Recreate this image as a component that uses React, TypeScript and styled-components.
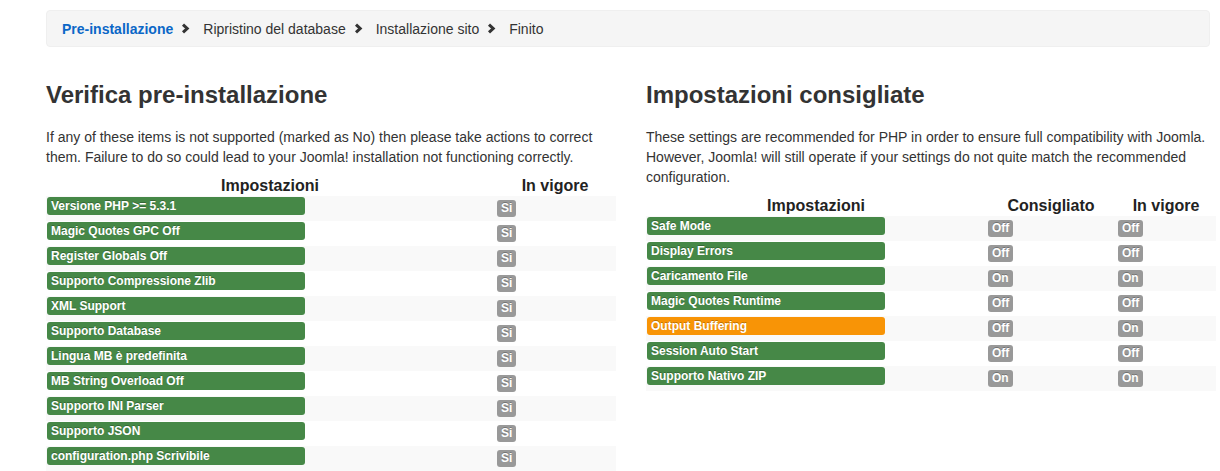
import React from 'react';
import styled, { createGlobalStyle } from 'styled-components';

const GlobalStyle = createGlobalStyle`
  html, body {
    margin: 0;
    padding: 0;
    background: #ffffff;
    font-family: 'Liberation Sans', Arial, sans-serif;
    color: #333333;
  }
`;

const Page = styled.div`
  padding: 10px 0 0 46px;
  width: 1174px;
`;

const Breadcrumb = styled.ul`
  display: flex;
  align-items: center;
  list-style: none;
  margin: 0;
  padding: 0 15px;
  width: 1132px;
  height: 35px;
  background: #f5f5f5;
  border: 1px solid #efefef;
  border-radius: 4px;
  font-size: 14px;
`;

const Crumb = styled.li<{ $active?: boolean }>`
  display: flex;
  align-items: center;
  color: ${(p) => (p.$active ? '#0b67c7' : '#333333')};
  font-weight: ${(p) => (p.$active ? 'bold' : 'normal')};
`;

const Chevron = styled.svg`
  margin: 0 13px 0 8px;
`;

const Columns = styled.div`
  display: grid;
  grid-template-columns: 570px 570px;
  column-gap: 30px;
  margin-top: 33px;
`;

const Title = styled.h2`
  margin: 0;
  font-size: 24px;
  line-height: 30px;
  font-weight: bold;
  color: #333333;
`;

const Intro = styled.p`
  margin: 17px 0 0;
  font-size: 14px;
  line-height: 20px;
  color: #333333;
`;

const Table = styled.div<{ $cols: string }>`
  display: grid;
  grid-template-columns: ${(p) => p.$cols};
  margin-top: 9px;
`;

const HeadCell = styled.div`
  text-align: center;
  font-weight: bold;
  font-size: 16px;
  line-height: 20px;
  color: #222222;
`;

const Row = styled.div<{ $odd: boolean }>`
  display: contents;
  & > div {
    background: ${(p) => (p.$odd ? '#f9f9f9' : '#ffffff')};
  }
`;

const Cell = styled.div<{ $pad: number }>`
  height: 25px;
  padding-left: ${(p) => p.$pad}px;
  box-sizing: border-box;
`;

const Label = styled.div<{ $width: number; $warn?: boolean }>`
  margin-top: 1px;
  width: ${(p) => p.$width}px;
  height: 18px;
  line-height: 18px;
  padding-left: 4px;
  box-sizing: border-box;
  border-radius: 3px;
  background: ${(p) => (p.$warn ? '#f89406' : '#468847')};
  color: #ffffff;
  font-size: 12px;
  font-weight: bold;
  text-shadow: 0 -1px 0 rgba(0, 0, 0, 0.25);
  white-space: nowrap;
`;

const Badge = styled.span`
  display: inline-block;
  margin-top: 4px;
  height: 17px;
  line-height: 17px;
  padding: 0 4px;
  border-radius: 3px;
  background: #999999;
  color: #ffffff;
  font-size: 12px;
  font-weight: bold;
  text-shadow: 0 -1px 0 rgba(0, 0, 0, 0.25);
`;

const preChecks = [
  'Versione PHP >= 5.3.1',
  'Magic Quotes GPC Off',
  'Register Globals Off',
  'Supporto Compressione Zlib',
  'XML Support',
  'Supporto Database',
  'Lingua MB è predefinita',
  'MB String Overload Off',
  'Supporto INI Parser',
  'Supporto JSON',
  'configuration.php Scrivibile',
];

const settings = [
  { name: 'Safe Mode', rec: 'Off', cur: 'Off' },
  { name: 'Display Errors', rec: 'Off', cur: 'Off' },
  { name: 'Caricamento File', rec: 'On', cur: 'On' },
  { name: 'Magic Quotes Runtime', rec: 'Off', cur: 'Off' },
  { name: 'Output Buffering', rec: 'Off', cur: 'On' },
  { name: 'Session Auto Start', rec: 'Off', cur: 'Off' },
  { name: 'Supporto Nativo ZIP', rec: 'On', cur: 'On' },
];

function Arrow() {
  return (
    <Chevron width="9" height="11" viewBox="0 0 9 11">
      <polyline points="2,1.6 6.2,5.5 2,9.4" fill="none" stroke="#333" strokeWidth="3" />
    </Chevron>
  );
}

export default function App() {
  return (
    <Page>
      <GlobalStyle />
      <Breadcrumb>
        <Crumb $active>Pre-installazione<Arrow /></Crumb>
        <Crumb>Ripristino del database<Arrow /></Crumb>
        <Crumb>Installazione sito<Arrow /></Crumb>
        <Crumb>Finito</Crumb>
      </Breadcrumb>
      <Columns>
        <section>
          <Title>Verifica pre-installazione</Title>
          <Intro>
            If any of these items is not supported (marked as No) then please take actions to correct
            them. Failure to do so could lead to your Joomla! installation not functioning correctly.
          </Intro>
          <Table $cols="448px 122px">
            <HeadCell>Impostazioni</HeadCell>
            <HeadCell>In vigore</HeadCell>
            {preChecks.map((name, i) => (
              <Row key={name} $odd={i % 2 === 0}>
                <Cell $pad={1}>
                  <Label $width={258}>{name}</Label>
                </Cell>
                <Cell $pad={3}>
                  <Badge>Si</Badge>
                </Cell>
              </Row>
            ))}
          </Table>
        </section>
        <section>
          <Title>Impostazioni consigliate</Title>
          <Intro>
            These settings are recommended for PHP in order to ensure full compatibility with Joomla.
            However, Joomla! will still operate if your settings do not quite match the recommended
            configuration.
          </Intro>
          <Table $cols="340px 130px 100px">
            <HeadCell>Impostazioni</HeadCell>
            <HeadCell>Consigliato</HeadCell>
            <HeadCell>In vigore</HeadCell>
            {settings.map((s, i) => (
              <Row key={s.name} $odd={i % 2 === 0}>
                <Cell $pad={1}>
                  <Label $width={238} $warn={s.rec !== s.cur}>{s.name}</Label>
                </Cell>
                <Cell $pad={2}>
                  <Badge>{s.rec}</Badge>
                </Cell>
                <Cell $pad={2}>
                  <Badge>{s.cur}</Badge>
                </Cell>
              </Row>
            ))}
          </Table>
        </section>
      </Columns>
    </Page>
  );
}
